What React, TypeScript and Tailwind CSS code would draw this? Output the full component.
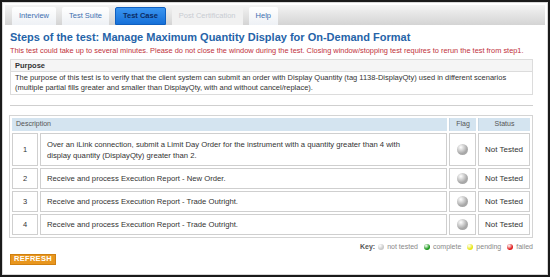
import React from 'react';

type Step = { n: number; text: string };

const steps: Step[] = [
  {
    n: 1,
    text: 'Over an iLink connection, submit a Limit Day Order for the instrument with a quantity greater than 4 with display quantity (DisplayQty) greater than 2.',
  },
  { n: 2, text: 'Receive and process Execution Report - New Order.' },
  { n: 3, text: 'Receive and process Execution Report - Trade Outright.' },
  { n: 4, text: 'Receive and process Execution Report - Trade Outright.' },
];

const tabs = [
  { label: 'Interview', state: 'normal' },
  { label: 'Test Suite', state: 'normal' },
  { label: 'Test Case', state: 'active' },
  { label: 'Post Certification', state: 'disabled' },
  { label: 'Help', state: 'normal' },
];

const Ball: React.FC<{ color: string; size?: number }> = ({ color, size = 11 }) => (
  <span
    className="inline-block rounded-full"
    style={{
      width: size,
      height: size,
      background: `radial-gradient(circle at 35% 30%, #ffffff 0%, ${color} 60%, ${color} 100%)`,
    }}
  />
);

const App: React.FC = () => {
  return (
    <div className="w-[550px] h-[277px] bg-white border-2 border-[#1a1a1a] overflow-hidden font-[Liberation_Sans,Arial,sans-serif]">
      <div className="h-full border border-[#d8d8d8] px-[2px] pt-[2px]">
        {/* tabs */}
        <div className="flex items-end gap-[6px] h-[20px] pl-[7px] bg-gradient-to-b from-[#f4f4f4] to-[#d4d4d4]">
          {tabs.map(t => (
            <div
              key={t.label}
              className={
                t.state === 'active'
                  ? 'h-[18px] px-[7px] rounded-t-[2px] flex items-center text-[7.5px] font-bold text-[#0b2b63] bg-gradient-to-b from-[#3a95f0] to-[#1570d8] border border-[#1060c0]'
                  : t.state === 'disabled'
                  ? 'h-[18px] px-[7px] rounded-t-[2px] flex items-center text-[7.5px] text-[#c8ccd2] bg-[#f1f1f1]'
                  : 'h-[18px] px-[7px] rounded-t-[2px] flex items-center text-[7.5px] text-[#3d6fb0] bg-gradient-to-b from-white to-[#eef1f5]'
              }
            >
              {t.label}
            </div>
          ))}
        </div>

        <div className="px-[5px]">
          <h1 className="mt-[5px] text-[11px] leading-[14px] font-bold text-[#2563a8]">
            Steps of the test: Manage Maximum Quantity Display for On-Demand Format
          </h1>
          <p className="mt-[2px] text-[7.4px] leading-[9px] text-[#c0303a]">
            This test could take up to several minutes. Please do not close the window during the test. Closing window/stopping test requires to rerun the test from step1.
          </p>

          {/* purpose */}
          <div className="mt-[4px] w-[523px] border border-[#dcdcdc]">
            <div className="px-[4px] h-[12px] flex items-center text-[7.5px] font-bold text-[#333] bg-[#f5f5f5] border-b border-[#dcdcdc]">
              Purpose
            </div>
            <div className="px-[4px] py-[1px] text-[7.5px] leading-[10px] text-[#333]">
              The purpose of this test is to verify that the client system can submit an order with Display Quantity (tag 1138-DisplayQty) used in different scenarios (multiple partial fills greater and smaller than DisplayQty, with and without cancel/replace).
            </div>
          </div>

          <div className="mt-[10px] w-[523px] h-px bg-[#cfcfcf]" />

          {/* steps table */}
          <table className="mt-[9px] w-[524px] border-separate border-spacing-[2px] border border-[#d4d4d4] text-[7.7px] text-[#333] -ml-[1px]">
            <thead>
              <tr className="h-[13px] bg-[#d4e4f0] text-[#555] text-[7px]">
                <th colSpan={2} className="text-left font-normal px-[4px]">Description</th>
                <th className="w-[27px] font-normal border-l border-[#c5d5e2]">Flag</th>
                <th className="w-[52px] font-normal border-l border-[#c5d5e2]">Status</th>
              </tr>
            </thead>
            <tbody>
              {steps.map(s => (
                <tr key={s.n} className={s.n === 1 ? 'h-[33px]' : 'h-[21px]'}>
                  <td className="w-[26px] text-center text-[7.5px] border border-[#cfcfcf]">{s.n}</td>
                  <td className="pl-[6px] pr-[28px] leading-[11px] border border-[#cfcfcf]">{s.text}</td>
                  <td className="text-center border border-[#cfcfcf]">
                    <div className="flex justify-center">
                      <Ball color="#a8a8a8" />
                    </div>
                  </td>
                  <td className="text-center text-[8px] border border-[#cfcfcf]">Not Tested</td>
                </tr>
              ))}
            </tbody>
          </table>

          <div className="mt-[4px] w-[523px] flex justify-end items-center gap-[3px] text-[7px] text-[#888]">
            <span className="font-bold text-[#555]">Key:</span>
            <Ball color="#c9c9c9" size={6} />
            <span className="mr-[3px]">not tested</span>
            <Ball color="#1e9a1e" size={6} />
            <span className="mr-[3px]">complete</span>
            <Ball color="#e8e81a" size={6} />
            <span className="mr-[3px]">pending</span>
            <Ball color="#e02020" size={6} />
            <span>failed</span>
          </div>

          <button className="mt-[1px] h-[11px] px-[3px] flex items-center text-[7.5px] font-bold text-white bg-[#e8961e] border border-[#d08010] tracking-[0.3px]">
            REFRESH
          </button>
        </div>
      </div>
    </div>
  );
};

export default App;
